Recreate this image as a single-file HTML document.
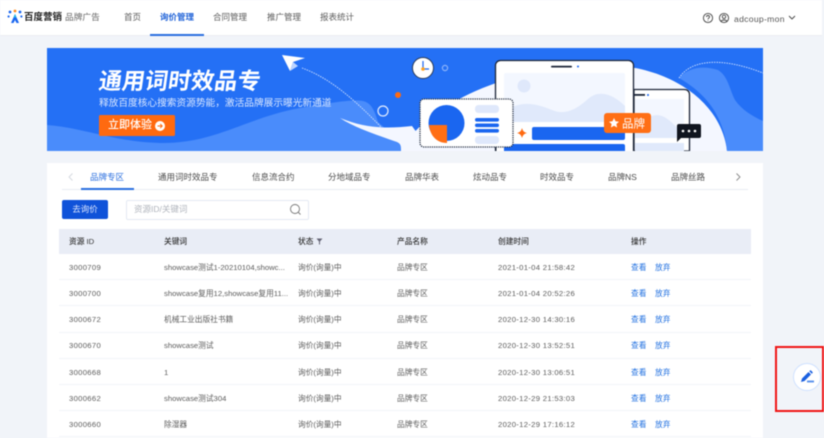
<!DOCTYPE html>
<html><head><meta charset="utf-8"><style>
html,body{margin:0;padding:0;width:824px;height:438px;overflow:hidden;background:#f1f4f9}
#w{position:relative;width:824px;height:438px;overflow:hidden;filter:blur(.5px);font-family:"Liberation Sans","Noto Sans CJK SC",sans-serif;background:#f1f4f9}
#w div,#w span.a{position:absolute;white-space:nowrap}
.t{font-size:7.7px;color:#5c5c5c;line-height:14px;height:14px}
.h{font-size:7.7px;color:#333;line-height:14px;height:14px;font-weight:500}
.l{font-size:7.7px;color:#1f6fe0;line-height:14px;height:14px}
.n{font-size:8.5px;color:#5c5c5c;line-height:12px;top:11px}
.tb{font-size:8.5px;color:#4c4c4c;line-height:12px;top:171px}
.ln{left:59px;width:692px;height:1px;background:#f2f4f8}
</style></head><body><div id="w">
<div style="left:0;top:0;width:822px;height:35px;background:#fff;border-bottom:1px solid #eceef3"></div>
<svg style="position:absolute;left:7px;top:9px" width="16" height="16" viewBox="0 0 16 16"><circle cx="3" cy="3" r="1.4" fill="#1a66f0"/><circle cx="8" cy="2" r="1.4" fill="#ff8a1f"/><circle cx="13" cy="3" r="1.4" fill="#1a66f0"/><circle cx="1.6" cy="7.5" r="1.1" fill="#1a66f0"/><circle cx="14.4" cy="7.5" r="1.1" fill="#1a66f0"/><path d="M8 5L12 14H9.5L8 11 6.5 14H4Z" fill="#1a66f0"/><path d="M8 5L9.5 8.5H6.5Z" fill="#19b5e8"/></svg>
<div style="left:24px;top:11px;font-size:9.5px;font-weight:700;color:#222;line-height:14px">百度营销</div>
<div style="left:65px;top:11px;font-size:8.7px;color:#666;line-height:12px">品牌广告</div>
<div class="n" style="left:124px">首页</div>
<div class="n" style="left:160px;color:#1f62d8;font-weight:700">询价管理</div>
<div class="n" style="left:213px">合同管理</div>
<div class="n" style="left:267px">推广管理</div>
<div class="n" style="left:320px">报表统计</div>
<div style="left:150px;top:34px;width:54px;height:2px;background:#2a6fdf"></div>
<svg style="position:absolute;left:702px;top:12px" width="28" height="12" viewBox="0 0 28 12" fill="none" stroke="#444" stroke-width=".9"><circle cx="6" cy="6" r="4.6"/><path d="M4.5 5c0-2 3-2 3 0 0 1-1.500 1-1.500 2.200M6 8.200v.7"/><circle cx="22" cy="6" r="4.6"/><circle cx="22" cy="4.800" r="1.700"/><path d="M19 9.500c.6-2 5.400-2 6 0"/></svg>
<div style="left:734px;top:12.500px;font-size:8.6px;letter-spacing:.3px;color:#555;line-height:12px">adcoup-mon</div>
<svg style="position:absolute;left:788px;top:15px" width="8" height="6" viewBox="0 0 8 6" fill="none" stroke="#444" stroke-width=".9"><path d="M1 1l3 3 3-3"/></svg>

<svg style="position:absolute;left:47px;top:48px" width="716" height="103" viewBox="47 48 716 103">
<rect x="47" y="48" width="716" height="103" fill="#2470f5"/>
<path d="M47 125C85 128 115 142 160 143 215 144 245 118 300 108 325 104 350 99 363 101 372 103 375 112 378 122L402 143 402 151H47Z" fill="#4a8cfb"/>
<path d="M340 118C365 128 385 129 412 126L430 151H401C401 146 401 144 397 142 380 136 355 128 340 118Z" fill="#f4f7ff"/>
<path d="M412 151V135C445 95 530 62 610 65 675 68 722 105 727 151Z" fill="#f4f7ff"/>
<path d="M679 78C690 66 705 66 718 70 728 76 729 88 735 100 742 110 752 116 763 121V151H727C724 115 705 93 679 78Z" fill="#4a8cfb"/>
<path d="M679 78C692 58 725 58 763 73" fill="none" stroke="#cfe0ff" stroke-width=".9" stroke-dasharray="1.500 1"/>
<path d="M302 68C330 78 355 100 382 128" fill="none" stroke="#cfe0ff" stroke-width=".9" stroke-dasharray="1.500 1"/>
<path d="M282 55L305 58 293 62 290 71Z" fill="#fff"/><path d="M293 62L298 66 290 71Z" fill="#bcd4ff"/>
<circle cx="398" cy="95" r="3" fill="#ff6a10"/>
<circle cx="383" cy="111" r="5" fill="none" stroke="#e3edff" stroke-width="1.200"/>
<circle cx="423" cy="68" r="10.500" fill="#fff" stroke="#2b3a55" stroke-width="1"/>
<path d="M423 61V69H429" stroke="#1a66f0" stroke-width="1.200" fill="none"/><circle cx="423" cy="69" r="1.800" fill="#ffa21f"/>
<circle cx="445" cy="68" r="2.600" fill="none" stroke="#8db4fb" stroke-width="1.200"/>
<rect x="495.500" y="60.500" width="138" height="100" rx="5" fill="#fff" stroke="#1c2538" stroke-width="1.300"/>
<rect x="551" y="65.700" width="21" height="1.800" rx=".9" fill="#1c2538"/><circle cx="578" cy="66.500" r="1" fill="#1a66f0"/>
<rect x="504" y="73" width="121" height="49" rx="2" fill="#f3f7ff"/>
<circle cx="524" cy="86" r="6.500" fill="#dfe8fb"/>
<path d="M504 112C520 100 535 103 552 110 566 116 578 108 588 99 600 88 615 96 625 106V122H504Z" fill="#e0e9fb"/>
<path d="M634 89.500H684Q689.500 89.500 689.500 95V151H634Z" fill="#fff" stroke="#1c2538" stroke-width="1.300"/>
<rect x="634" y="94" width="11" height="1.800" fill="#1c2538"/><circle cx="648" cy="95" r="1" fill="#1a66f0"/>
<rect x="635" y="99" width="49" height="39" fill="#f3f7ff"/>
<path d="M635 128C645 122 650 112 662 116 672 120 677 130 684 132V138H635Z" fill="#e0e9fb"/>
<rect x="635" y="143" width="49" height="8" fill="#e0e9fb"/>
<rect x="532" y="127" width="93" height="13" rx="2" fill="#1a66f0"/>
<rect x="504" y="144" width="121" height="10" rx="2" fill="#1a66f0"/>
<path d="M522 128Q522.800 132.200 527 133 522.800 133.800 522 138 521.200 133.800 517 133 521.200 132.200 522 128Z" fill="#ff6a10"/>
<rect x="604" y="113" width="47" height="20" rx="3" fill="#ff6f15"/>
<path d="M614 118L615.500 121.300 619 121.700 616.400 124 617.100 127.500 614 125.800 610.900 127.500 611.600 124 609 121.700 612.500 121.300Z" fill="#fff"/>
<text x="622" y="127.500" font-size="11.500" fill="#fff" font-family="Liberation Sans,Noto Sans CJK SC,sans-serif">品牌</text>
<path d="M679 124H699Q701 124 701 126V136Q701 138 699 138H681L677 142V126Q677 124 679 124Z" fill="#10151f"/>
<circle cx="683" cy="131" r="1.300" fill="#fff"/><circle cx="689" cy="131" r="1.300" fill="#fff"/><circle cx="695" cy="131" r="1.300" fill="#fff"/>
<rect x="495" y="146" width="1.500" height="6" fill="#1c2538"/>
<rect x="420" y="99" width="93" height="48" rx="4" fill="#fff" stroke="#222c3f" stroke-width="1.300" stroke-dasharray="1.200 1"/>
<circle cx="446.500" cy="123" r="18" fill="#1a66f0"/>
<path d="M429 125H447V143C436 143 430 135 429 125Z" fill="#ff6f15"/>
<rect x="475" y="105" width="24" height="8" rx="3.500" fill="#dfe8fb"/>
<rect x="475" y="118" width="24" height="3.600" rx="1.800" fill="#1a66f0"/>
<rect x="475" y="123.500" width="24" height="3.600" rx="1.800" fill="#1a66f0"/>
<rect x="475" y="129" width="24" height="3.600" rx="1.800" fill="#1a66f0"/>
<rect x="475" y="136" width="24" height="8" rx="3.500" fill="#dfe8fb"/>
</svg>
<div style="left:99px;top:65px;font-size:23px;letter-spacing:.1px;transform:skewX(-8deg);font-weight:700;color:#fff;line-height:32px">通用词时效品专</div>
<div style="left:99px;top:97px;font-size:9.7px;color:#d8e6ff;line-height:13px">释放百度核心搜索资源势能，激活品牌展示曝光新通道</div>
<div style="left:99px;top:115px;width:76px;height:21px;background:#ff6a10;border-radius:1.500px"></div>
<div style="left:108px;top:118px;font-size:11px;color:#fff;line-height:15px;font-weight:500">立即体验</div>
<svg style="position:absolute;left:155px;top:121px" width="10" height="10" viewBox="0 0 10 10"><circle cx="5" cy="5" r="5" fill="#fff"/><path d="M2.500 5H7M5.200 3L7.200 5 5.200 7" stroke="#ff6a10" stroke-width="1" fill="none"/></svg>

<div style="left:47px;top:163px;width:716px;height:275px;background:#fff"></div>
<svg style="position:absolute;left:67px;top:172px" width="8" height="10" viewBox="0 0 8 10" fill="none" stroke="#d4d8df" stroke-width=".9"><path d="M5.500 1.500L2 5l3.500 3.500"/></svg>
<svg style="position:absolute;left:734px;top:172px" width="8" height="10" viewBox="0 0 8 10" fill="none" stroke="#888" stroke-width=".9"><path d="M2.500 1.500L6 5 2.500 8.500"/></svg>
<div class="tb" style="left:90px;color:#2a6fdf">品牌专区</div>
<div class="tb" style="left:158px">通用词时效品专</div>
<div class="tb" style="left:252px">信息流合约</div>
<div class="tb" style="left:328px">分地域品专</div>
<div class="tb" style="left:405px">品牌华表</div>
<div class="tb" style="left:473px">炫动品专</div>
<div class="tb" style="left:540px">时效品专</div>
<div class="tb" style="left:608px">品牌NS</div>
<div class="tb" style="left:671px">品牌丝路</div>
<div style="left:62px;top:189px;width:686px;height:1px;background:#e9ecf3"></div>
<div style="left:81px;top:188px;width:53px;height:2px;background:#2a6fdf"></div>
<div style="left:62px;top:200px;width:46px;height:19px;background:#0f52d9;border-radius:2px;color:#dfe8ff;font-size:8.500px;line-height:19px;text-align:center">去询价</div>
<div style="left:126px;top:200px;width:181px;height:18px;border:1px solid #e4e9f3;border-radius:2px;background:#fff"></div>
<div style="left:134px;top:203px;font-size:8.500px;color:#b0b4bc;line-height:12px">资源ID/关键词</div>
<svg style="position:absolute;left:289px;top:203px" width="13" height="13" viewBox="0 0 13 13" fill="none" stroke="#777" stroke-width=".9"><circle cx="6" cy="6" r="4.500"/><path d="M9.300 9.300L11.500 11.500"/></svg>
<div style="left:59px;top:229px;width:692px;height:25px;background:#e9edf6"></div>
<div class="h" style="left:69px;top:235px">资源 ID</div>
<div class="h" style="left:164px;top:235px">关键词</div>
<div class="h" style="left:298px;top:235px">状态</div>
<svg style="position:absolute;left:316px;top:238px" width="7" height="7" viewBox="0 0 7 7"><path d="M.5.500H6.500L4 3.500V6.500H3V3.500Z" fill="#667"/></svg>
<div class="h" style="left:397px;top:235px">产品名称</div>
<div class="h" style="left:498px;top:235px">创建时间</div>
<div class="h" style="left:631px;top:235px">操作</div>

<div class="t" style="left:69px;top:261px;letter-spacing:.3px">3000709</div><div class="t" style="left:164px;top:261px">showcase测试1-20210104,showc...</div><div class="t" style="left:298px;top:261px">询价(询量)中</div><div class="t" style="left:397px;top:261px">品牌专区</div><div class="t" style="left:498px;top:261px;letter-spacing:.3px">2021-01-04 21:58:42</div><div class="l" style="left:631px;top:261px">查看</div><div class="l" style="left:655px;top:261px">放弃</div>
<div class="ln" style="top:279px"></div>
<div class="t" style="left:69px;top:287px;letter-spacing:.3px">3000700</div><div class="t" style="left:164px;top:287px">showcase复用12,showcase复用11...</div><div class="t" style="left:298px;top:287px">询价(询量)中</div><div class="t" style="left:397px;top:287px">品牌专区</div><div class="t" style="left:498px;top:287px;letter-spacing:.3px">2021-01-04 20:52:26</div><div class="l" style="left:631px;top:287px">查看</div><div class="l" style="left:655px;top:287px">放弃</div>
<div class="ln" style="top:305px"></div>
<div class="t" style="left:69px;top:313px;letter-spacing:.3px">3000672</div><div class="t" style="left:164px;top:313px">机械工业出版社书籍</div><div class="t" style="left:298px;top:313px">询价(询量)中</div><div class="t" style="left:397px;top:313px">品牌专区</div><div class="t" style="left:498px;top:313px;letter-spacing:.3px">2020-12-30 14:30:16</div><div class="l" style="left:631px;top:313px">查看</div><div class="l" style="left:655px;top:313px">放弃</div>
<div class="ln" style="top:332px"></div>
<div class="t" style="left:69px;top:339px;letter-spacing:.3px">3000670</div><div class="t" style="left:164px;top:339px">showcase测试</div><div class="t" style="left:298px;top:339px">询价(询量)中</div><div class="t" style="left:397px;top:339px">品牌专区</div><div class="t" style="left:498px;top:339px;letter-spacing:.3px">2020-12-30 13:52:51</div><div class="l" style="left:631px;top:339px">查看</div><div class="l" style="left:655px;top:339px">放弃</div>
<div class="ln" style="top:358px"></div>
<div class="t" style="left:69px;top:366px;letter-spacing:.3px">3000668</div><div class="t" style="left:164px;top:366px">1</div><div class="t" style="left:298px;top:366px">询价(询量)中</div><div class="t" style="left:397px;top:366px">品牌专区</div><div class="t" style="left:498px;top:366px;letter-spacing:.3px">2020-12-30 13:06:51</div><div class="l" style="left:631px;top:366px">查看</div><div class="l" style="left:655px;top:366px">放弃</div>
<div class="ln" style="top:384px"></div>
<div class="t" style="left:69px;top:392px;letter-spacing:.3px">3000662</div><div class="t" style="left:164px;top:392px">showcase测试304</div><div class="t" style="left:298px;top:392px">询价(询量)中</div><div class="t" style="left:397px;top:392px">品牌专区</div><div class="t" style="left:498px;top:392px;letter-spacing:.3px">2020-12-29 21:53:03</div><div class="l" style="left:631px;top:392px">查看</div><div class="l" style="left:655px;top:392px">放弃</div>
<div class="ln" style="top:410px"></div>
<div class="t" style="left:69px;top:418px;letter-spacing:.3px">3000660</div><div class="t" style="left:164px;top:418px">除湿器</div><div class="t" style="left:298px;top:418px">询价(询量)中</div><div class="t" style="left:397px;top:418px">品牌专区</div><div class="t" style="left:498px;top:418px;letter-spacing:.3px">2020-12-29 17:16:12</div><div class="l" style="left:631px;top:418px">查看</div><div class="l" style="left:655px;top:418px">放弃</div>
<div class="ln" style="top:436px"></div>

<div style="left:775px;top:346px;width:45px;height:62px;border:2px solid #f01414"></div>
<div style="left:793px;top:363px;width:26px;height:26px;border:1px solid #cfe1ff;border-radius:50%;background:#fff"></div>
<svg style="position:absolute;left:800px;top:370px" width="15" height="14" viewBox="0 0 15 14"><path d="M1 12L2 8.500 8.500 2 11 4.500 4.500 11Z" fill="#1a5fe0"/><path d="M9.300 1.200L10 .5Q10.500 0 11 .5L12.500 2Q13 2.500 12.500 3L11.800 3.700Z" fill="#1a5fe0"/><rect x="7" y="10.500" width="7" height="2" fill="#5f95ee"/></svg>
</div></body></html>
